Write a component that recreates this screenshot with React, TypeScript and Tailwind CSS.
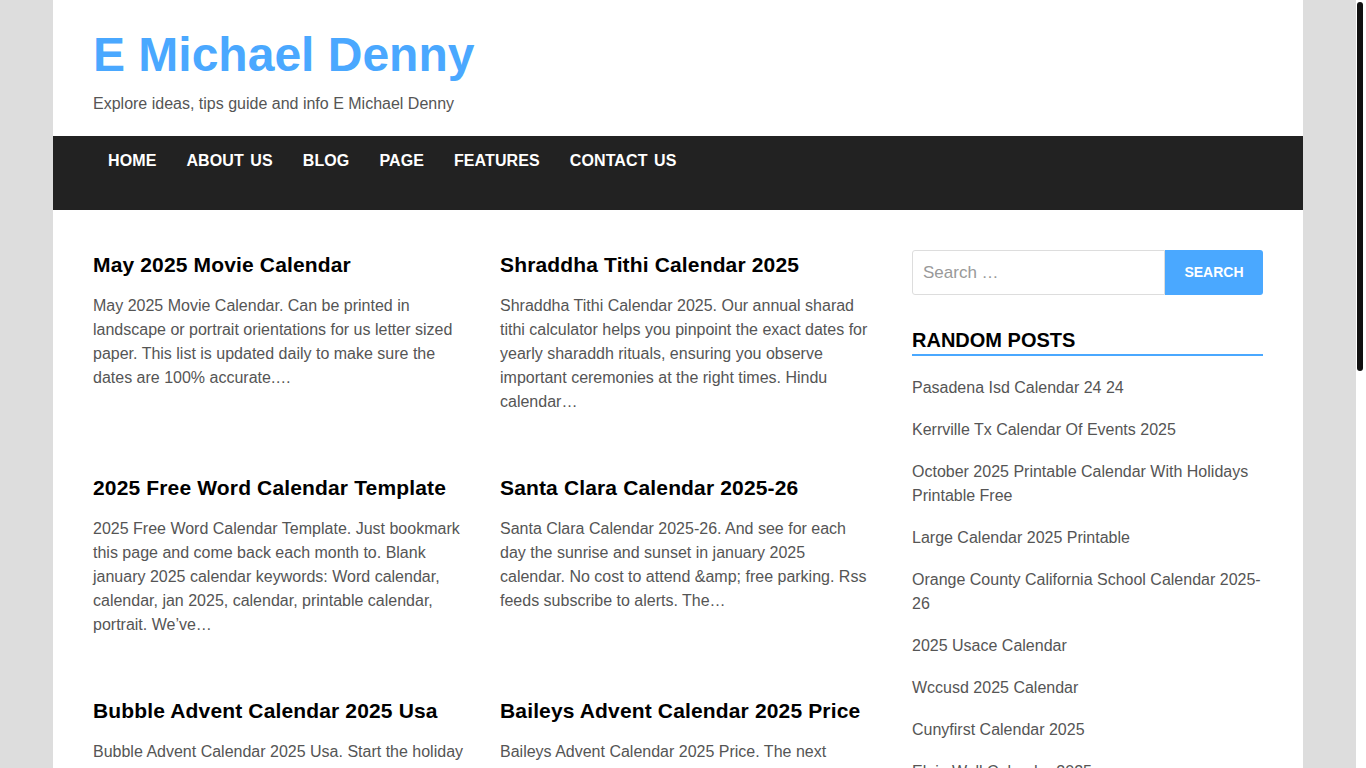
import React from 'react';

interface Post {
    title: string;
    excerpt: string;
}

const posts: Post[] = [
    {
        title: 'May 2025 Movie Calendar',
        excerpt: 'May 2025 Movie Calendar. Can be printed in landscape or portrait orientations for us letter sized paper. This list is updated daily to make sure the dates are 100% accurate.…',
    },
    {
        title: 'Shraddha Tithi Calendar 2025',
        excerpt: 'Shraddha Tithi Calendar 2025. Our annual sharad tithi calculator helps you pinpoint the exact dates for yearly sharaddh rituals, ensuring you observe important ceremonies at the right times. Hindu calendar…',
    },
    {
        title: '2025 Free Word Calendar Template',
        excerpt: '2025 Free Word Calendar Template. Just bookmark this page and come back each month to. Blank january 2025 calendar keywords: Word calendar, calendar, jan 2025, calendar, printable calendar, portrait. We’ve…',
    },
    {
        title: 'Santa Clara Calendar 2025-26',
        excerpt: 'Santa Clara Calendar 2025-26. And see for each day the sunrise and sunset in january 2025 calendar. No cost to attend &amp; free parking. Rss feeds subscribe to alerts. The…',
    },
    {
        title: 'Bubble Advent Calendar 2025 Usa',
        excerpt: 'Bubble Advent Calendar 2025 Usa. Start the holiday season with a countdown full of surprises and small treats for every single day of december.…',
    },
    {
        title: 'Baileys Advent Calendar 2025 Price',
        excerpt: 'Baileys Advent Calendar 2025 Price. The next festive season brings a new collection of miniature treats to enjoy while counting down the days.…',
    },
];

const randomPosts = [
    'Pasadena Isd Calendar 24 24',
    'Kerrville Tx Calendar Of Events 2025',
    'October 2025 Printable Calendar With Holidays Printable Free',
    'Large Calendar 2025 Printable',
    'Orange County California School Calendar 2025-26',
    '2025 Usace Calendar',
    'Wccusd 2025 Calendar',
    'Cunyfirst Calendar 2025',
    'Elgin Wall Calendar 2025',
    'Ucf Academic Calendar 2025',
];

const menu = ['Home', 'About Us', 'Blog', 'Page', 'Features', 'Contact Us'];

export default function App() {
    return (
        <div className="min-h-screen bg-white pr-[10px] font-['Liberation_Sans',Arial,sans-serif]">
            {/* scrollbar thumb */}
            <div className="fixed right-[3px] top-[2px] h-[369px] w-[6px] rounded-full bg-[#111111]" />

            <div className="min-h-screen bg-[#dddddd]">
                <div className="mx-auto w-[1250px] bg-white">
                    {/* Header */}
                    <header className="px-10 pt-[26px] pb-[20px]">
                        <h1 className="text-[48px] font-bold leading-[58px] text-[#4aa8ff]">E Michael Denny</h1>
                        <p className="mt-[8px] text-[16px] leading-[24px] text-[#555555]">
                            Explore ideas, tips guide and info E Michael Denny
                        </p>
                    </header>

                    {/* Navigation */}
                    <nav className="bg-[#222222] px-10 pt-px pb-[25px]">
                        <ul className="flex">
                            {menu.map((item) => (
                                <li
                                    key={item}
                                    className="px-[15px] text-[16px] font-bold uppercase leading-[48px] tracking-[0.1px] text-white [word-spacing:2px]"
                                >
                                    {item}
                                </li>
                            ))}
                        </ul>
                    </nav>

                    {/* Content */}
                    <div className="flex gap-[44px] px-10 pt-[41px] pb-10">
                        <main className="grid w-[775px] shrink-0 grid-cols-[372px_368px] content-start gap-x-[35px] gap-y-[60px]">
                            {posts.map((post, index) => (
                                <article key={index}>
                                    <h2 className="mb-[16px] text-[21px] font-bold leading-[27px] tracking-[0.15px] text-black">
                                        {post.title}
                                    </h2>
                                    <p className="text-[16px] leading-[24px] text-[#555555]">{post.excerpt}</p>
                                </article>
                            ))}
                        </main>

                        <aside className="-mt-px w-[351px] shrink-0">
                            <form className="flex h-[45px]" onSubmit={(e) => e.preventDefault()}>
                                <input
                                    type="search"
                                    placeholder="Search …"
                                    className="h-full w-[253px] rounded-l-[3px] border border-[#dddddd] px-[10px] text-[17px] text-[#555555] outline-none placeholder:text-[#999999]"
                                />
                                <button
                                    type="submit"
                                    className="h-full flex-1 rounded-r-[3px] bg-[#4aa8ff] text-[14px] font-bold uppercase text-white"
                                >
                                    Search
                                </button>
                            </form>

                            <h3 className="mt-[32px] border-b-2 border-[#4aa8ff] pb-[1px] text-[20px] font-bold uppercase leading-[26px] text-black">
                                Random Posts
                            </h3>
                            <ul className="mt-[20px] space-y-[18px]">
                                {randomPosts.map((item) => (
                                    <li key={item} className="text-[16px] leading-[24px] text-[#555555]">
                                        {item}
                                    </li>
                                ))}
                            </ul>
                        </aside>
                    </div>
                </div>
            </div>
        </div>
    );
}
